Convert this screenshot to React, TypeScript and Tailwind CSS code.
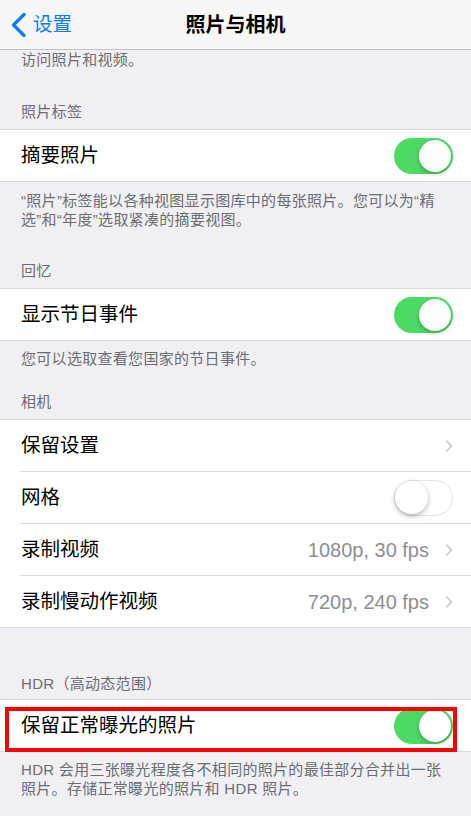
import { ChevronRight } from "lucide-react";

const font = "font-['Liberation_Sans','Noto_Sans_CJK_SC',sans-serif]";
const note = "text-[15px] tracking-[0.3px] text-[#6d6d72]";

function Toggle({ on }: { on: boolean }) {
    if (on) {
        return (
            <div className="w-[59px] h-[36px] rounded-full bg-[#4cd964] flex items-center justify-end pr-[2px]">
                <div className="w-[32px] h-[32px] rounded-full bg-white shadow-[0_2px_4px_rgba(0,0,0,0.25)]" />
            </div>
        );
    }
    return (
        <div className="w-[59px] h-[36px] rounded-full bg-white border-[1.5px] border-[#e3e3e7] flex items-center">
            <div className="w-[33px] h-[33px] rounded-full bg-white shadow-[0_2px_5px_rgba(0,0,0,0.3)]" />
        </div>
    );
}

function Row({ label, value, toggle, chevron }: { label: string; value?: string; toggle?: boolean; chevron?: boolean }) {
    return (
        <div className="h-[51px] flex items-center justify-between pl-[21px] pr-[18px]">
            <span className="text-[19.5px] text-black">{label}</span>
            <div className="flex items-center gap-[10px]">
                {value && <span className="text-[20px] text-[#8e8e93] font-['Liberation_Sans',sans-serif]">{value}</span>}
                {toggle !== undefined && <Toggle on={toggle} />}
                {chevron && <ChevronRight size={20} strokeWidth={2} className="text-[#c7c7cc] -mr-[6px]" />}
            </div>
        </div>
    );
}

const Sep = () => <div className="ml-[20px] h-px bg-[#dcdce0]" />;

export default function App() {
    return (
        <div className={`w-[471px] h-[816px] overflow-hidden bg-[#efeff4] ${font}`}>
            {/* nav bar */}
            <div className="h-[50px] bg-[#f7f7f7] border-b border-[#c4c4c8] grid grid-cols-[1fr_auto_1fr] items-center">
                <div className="flex items-center pl-[11px] gap-[7px] text-[#0a7aff]">
                    <svg width="15" height="24" viewBox="0 0 15 24" fill="none">
                        <path d="M13 1.5 L2.5 12 L13 22.5" stroke="currentColor" strokeWidth="3.2" strokeLinecap="round" strokeLinejoin="round" />
                    </svg>
                    <span className="text-[19.5px]">设置</span>
                </div>
                <span className="text-[20px] font-semibold text-black">照片与相机</span>
                <div />
            </div>

            <p className={`pl-[21px] leading-[20px] ${note}`}>访问照片和视频。</p>

            <p className={`mt-[32px] pb-[7px] pl-[21px] leading-[20px] ${note}`}>照片标签</p>
            <div className="bg-white border-y border-[#d9d9dd]">
                <Row label="摘要照片" toggle={true} />
            </div>
            <p className={`pt-[9px] px-[21px] leading-[19px] ${note}`}>
                “照片”标签能以各种视图显示图库中的每张照片。您可以为“精<br />
                选”和“年度”选取紧凑的摘要视图。
            </p>

            <p className={`mt-[32px] pb-[7px] pl-[21px] leading-[20px] ${note}`}>回忆</p>
            <div className="bg-white border-y border-[#d9d9dd]">
                <Row label="显示节日事件" toggle={true} />
            </div>
            <p className={`pt-[8px] px-[21px] leading-[19px] ${note}`}>您可以选取查看您国家的节日事件。</p>

            <p className={`mt-[24px] pb-[7px] pl-[21px] leading-[20px] ${note}`}>相机</p>
            <div className="bg-white border-y border-[#d9d9dd]">
                <Row label="保留设置" chevron />
                <Sep />
                <Row label="网格" toggle={false} />
                <Sep />
                <Row label="录制视频" value="1080p, 30 fps" chevron />
                <Sep />
                <Row label="录制慢动作视频" value="720p, 240 fps" chevron />
            </div>

            <p className={`mt-[46px] pb-[5px] pl-[21px] leading-[20px] ${note}`}>HDR（高动态范围）</p>
            <div className="relative bg-white border-y border-[#d9d9dd]">
                <Row label="保留正常曝光的照片" toggle={true} />
                {/* highlight frame */}
                <div className="absolute left-[5px] top-[7px] w-[452px] h-[45px] border-[4px] border-[#ff0000] pointer-events-none" />
            </div>
            <p className={`pt-[8px] px-[21px] leading-[19px] ${note}`}>
                HDR 会用三张曝光程度各不相同的照片的最佳部分合并出一张<br />
                照片。存储正常曝光的照片和 HDR 照片。
            </p>
        </div>
    );
}
